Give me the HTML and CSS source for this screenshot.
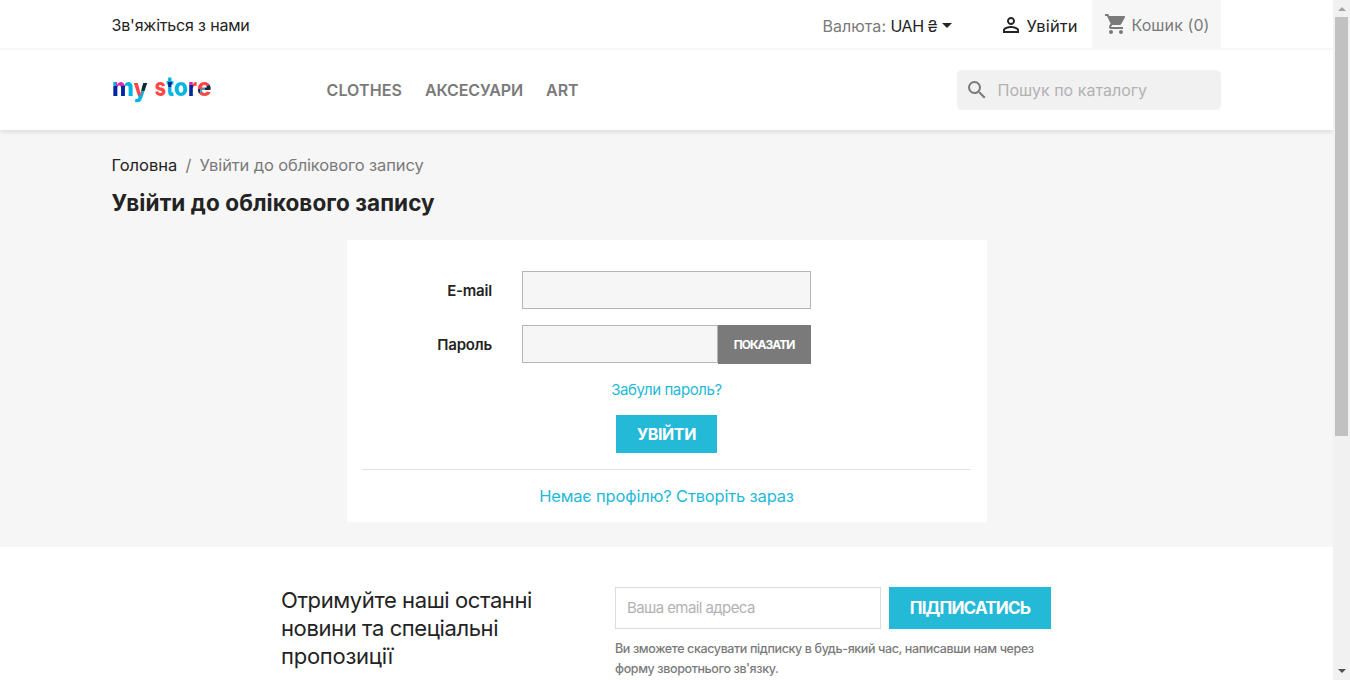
FILE: index.html
```html
<!DOCTYPE html>
<html lang="uk">
<head>
<meta charset="utf-8">
<title>Увійти</title>
<link rel="stylesheet" href="styles.css">
</head>
<body>
<div class="window">
<div class="page">
  <header class="header">
    <nav class="topbar">
      <div class="container topbar-row">
        <a class="contact">Зв'яжіться з нами</a>
        <div class="currency"><span class="currency-label">Валюта:</span><span class="currency-value">UAH ₴</span><i class="caret"></i></div>
        <a class="signin">
          <svg class="icon-user" viewBox="0 0 24 24"><path d="M12 5.9a2.1 2.1 0 1 1 0 4.2 2.1 2.1 0 0 1 0-4.2m0 9c2.970 0 6.100 1.460 6.100 2.100v1.100H5.900V17c0-.640 3.130-2.100 6.100-2.100M12 4C9.790 4 8 5.790 8 8s1.790 4 4 4 4-1.790 4-4-1.790-4-4-4zm0 9c-2.670 0-8 1.340-8 4v3h16v-3c0-2.660-5.330-4-8-4z"/></svg>
          <span class="signin-text">Увійти</span>
        </a>
        <div class="cart">
          <svg class="icon-cart" viewBox="0 0 24 24"><path d="M7 18c-1.100 0-1.990.9-1.990 2S5.900 22 7 22s2-.9 2-2-.9-2-2-2zM1 2v2h2l3.600 7.590-1.350 2.450C5.090 14.320 5 14.650 5 15c0 1.100.9 2 2 2h12v-2H7.420c-.140 0-.250-.110-.250-.250l.030-.120.9-1.630h7.450c.750 0 1.410-.410 1.750-1.030l3.580-6.490A1 1 0 0 0 20 4H5.210l-.940-2H1zm16 16c-1.100 0-1.990.9-1.990 2s.890 2 1.990 2 2-.9 2-2-.9-2-2-2z"/></svg>
          <span class="cart-text">Кошик (0)</span>
        </div>
      </div>
    </nav>
    <div class="container main-row">
      <svg class="logo" viewBox="0 0 100 40" role="img" aria-label="my store">
        <defs>
          <clipPath id="wordmark">
            <text class="logo-text" x="0" y="26" textLength="22" lengthAdjust="spacingAndGlyphs">m</text>
            <text class="logo-text" x="21.500" y="27" textLength="14" lengthAdjust="spacingAndGlyphs">y</text>
            <text class="logo-text" x="42.500" y="26" textLength="11.500" lengthAdjust="spacingAndGlyphs">s</text>
            <text class="logo-text tall" x="54.500" y="26" textLength="7.500" lengthAdjust="spacingAndGlyphs">t</text>
            <text class="logo-text" x="62" y="26" textLength="14" lengthAdjust="spacingAndGlyphs">o</text>
            <text class="logo-text" x="76" y="26" textLength="9" lengthAdjust="spacingAndGlyphs">r</text>
            <text class="logo-text" x="85" y="26" textLength="14.500" lengthAdjust="spacingAndGlyphs">e</text>
          </clipPath>
        </defs>
        <g clip-path="url(#wordmark)">
          <rect class="cyan" width="100" height="40"/>
          <rect class="navy" x="0" y="16" width="13" height="12"/>
          <rect class="magenta" x="4" y="10" width="9" height="6"/>
          <path class="red" d="M21.500 8h8v17h-8z"/>
          <path class="ink" d="M29.500 8h7v13h-7z"/>
          <rect class="red" x="42" y="8" width="12" height="20"/>
          <rect class="navy" x="56" y="12" width="4" height="5"/>
          <rect class="navy" x="76" y="8" width="5" height="20"/>
          <rect class="magenta" x="76" y="10" width="5" height="5"/>
          <rect class="red" x="81" y="8" width="19" height="20"/>
          <path class="cyan" d="M87 20l7-2v3l-7 2z"/>
          <path class="ink" d="M84 20l4-1v4h-4zM93 17l7-3v5l-7 2z"/>
        </g>
      </svg>
      <nav class="menu"><a class="m1">CLOTHES</a><a class="m2">АКСЕСУАРИ</a><a class="m3">ART</a></nav>
      <div class="search">
        <svg class="icon-search" viewBox="0 0 24 24"><path d="M15.500 14h-.790l-.280-.270A6.470 6.470 0 0 0 16 9.500 6.500 6.500 0 1 0 9.500 16c1.610 0 3.090-.590 4.230-1.570l.270.280v.790l5 4.990L20.490 19l-4.990-5zm-6 0C7.010 14 5 11.990 5 9.500S7.010 5 9.500 5 14 7.010 14 9.500 11.990 14 9.500 14z"/></svg>
        <span class="search-text">Пошук по каталогу</span>
      </div>
    </div>
  </header>

  <main class="wrapper">
    <div class="container">
      <div class="breadcrumb"><a class="crumb-home">Головна</a><span class="crumb-sep">/</span><span class="crumb-here">Увійти до облікового запису</span></div>
      <h1 class="title">Увійти до облікового запису</h1>
      <section class="card">
        <div class="field"><label class="label">E-mail</label><div class="input"></div></div>
        <div class="field"><label class="label">Пароль</label><div class="group"><div class="input"></div><button class="show"><span class="show-text">ПОКАЗАТИ</span></button></div></div>
        <a class="forgot">Забули пароль?</a>
        <button class="submit"><span class="submit-text">УВІЙТИ</span></button>
        <hr class="rule">
        <a class="create">Немає профілю? Створіть зараз</a>
      </section>
    </div>
  </main>

  <footer class="newsletter">
    <p class="news-title"><span class="n1">Отримуйте наші останні</span><br><span class="n2">новини та спеціальні</span><br><span class="n3">пропозиції</span></p>
    <div class="news-form">
      <div class="news-row"><div class="news-input"><span class="news-placeholder">Ваша email адреса</span></div><button class="subscribe"><span class="subscribe-text">ПІДПИСАТИСЬ</span></button></div>
      <p class="note"><span class="t1">Ви зможете скасувати підписку в будь-який час, написавши нам через</span><br><span class="t2">форму зворотнього зв'язку.</span></p>
    </div>
  </footer>
</div>
<div class="scrollbar"><i class="arrow-up"></i><div class="thumb"></div><i class="arrow-down"></i></div>
</div>
</body>
</html>
```
FILE: styles.css
```css
* { box-sizing: border-box; }
body { margin: 0; background: #fff; color: #232323; font: 16px/20px Inter, "Noto Sans", sans-serif; overflow: hidden; }
button { border: 0; padding: 0; font-family: inherit; color: #fff; white-space: nowrap; }
span, a, label { white-space: nowrap; }
.window { display: flex; width: 1350px; height: 680px; overflow: hidden; }
.page { width: 1333px; height: 680px; overflow: hidden; }
.container { width: 1110px; margin: 0 auto; }

.header { position: relative; height: 130px; background: #fff; box-shadow: 0 2px 5px rgba(0,0,0,.11); }
.topbar { height: 50px; border-bottom: 2px solid #f6f6f6; }
.topbar-row { display: flex; height: 48px; padding-right: 1px; }
.contact { padding-top: 15px; margin-right: auto; letter-spacing: -.18px; }
.currency { display: flex; width: 179px; padding-top: 16px; }
.currency-label { width: 68px; color: #7a7a7a; letter-spacing: .05px; }
.currency-value { width: 51px; letter-spacing: -.5px; }
.caret { width: 0; height: 0; margin-top: 7px; border: 5px solid transparent; border-top-color: #232323; border-bottom: 0; }
.signin { display: flex; width: 90px; padding-top: 16px; }
.icon-user { width: 24px; height: 24px; margin: -3px 4px 0 -3px; fill: #232323; }
.signin-text { font-size: 16.500px; letter-spacing: .12px; }
.cart { display: flex; width: 129px; height: 48px; padding: 15px 0 0 12px; background: #f6f6f6; color: #7a7a7a; }
.icon-cart { width: 24px; height: 24px; margin: -3px 4px 0 0; fill: #7a7a7a; }
.cart-text { letter-spacing: .08px; }

.main-row { display: flex; padding: 20px 1px 0 0; }
.logo { width: 100px; height: 40px; margin-right: 115px; }
.logo-text { font: 800 25px Inter, sans-serif; }
.logo-text.tall { font-size: 27px; }
.cyan { fill: #00b5e2; }
.navy { fill: #00269a; }
.magenta { fill: #d62ab0; }
.red { fill: #ff4745; }
.ink { fill: #0b2e3a; }
.menu { display: flex; flex: 1; padding-top: 10px; color: #7a7a7a; font-weight: 600; }
.m1 { width: 98.500px; letter-spacing: .1px; }
.m2 { width: 121px; letter-spacing: -.12px; }
.m3 { letter-spacing: 0; }
.search { display: flex; align-items: center; width: 264px; height: 40px; padding-left: 8px; border-radius: 5px; background: #f1f1f1; color: #b2b2b2; }
.icon-search { width: 24px; height: 24px; margin-right: 9px; fill: #7a7a7a; }
.search-text { letter-spacing: .02px; }

.wrapper { height: 417px; padding-top: 25px; background: #f6f6f6; }
.breadcrumb { display: flex; height: 20px; color: #7a7a7a; font-size: 16.500px; }
.crumb-home { width: 74px; color: #232323; letter-spacing: -.03px; }
.crumb-sep { width: 14px; }
.crumb-here { letter-spacing: -.13px; }
.title { margin: 14px 0 23px; font-size: 22.500px; line-height: 28px; font-weight: 650; letter-spacing: .08px; }
.card { display: flex; flex-direction: column; align-items: center; width: 640px; height: 282px; margin: 0 auto; padding: 31px 15px 0; background: #fff; }
.field { display: flex; width: 100%; height: 38px; margin-bottom: 16px; }
.label { width: 130.500px; margin-right: 29.500px; padding-top: 10px; font-size: 15px; font-weight: 600; text-align: right; letter-spacing: -.2px; }
.input { width: 289px; height: 38px; border: 1px solid #b5b5b5; background: #f6f6f6; }
.group { display: flex; width: 289px; }
.group .input { width: 196px; }
.show { width: 93px; height: 39px; background: #7a7a7a; font-size: 12px; font-weight: 700; }
.show-text { letter-spacing: -1px; }
.forgot { margin-top: 1px; color: #24b9d7; font-size: 15px; letter-spacing: -.4px; }
.submit { width: 101px; height: 38px; margin-top: 15px; background: #24b9d7; font-size: 16px; font-weight: 700; }
.submit-text { letter-spacing: -.4px; }
.rule { width: 609px; height: 1px; margin: 16px 0; border: 0; background: #e3e3e3; }
.create { color: #24b9d7; font-size: 16.500px; letter-spacing: -.17px; }

.newsletter { display: flex; padding: 40px 0 0 281px; }
.news-title { width: 334px; margin: -1px 0 0; font-size: 22px; line-height: 28px; letter-spacing: -.4px; }
.n3 { letter-spacing: -.25px; }
.news-row { display: flex; gap: 8px; }
.news-input { width: 266px; height: 42px; padding: 10px 11px; border: 1px solid #dcdcdc; color: #b2b2b2; font-size: 15px; }
.news-placeholder { letter-spacing: -.6px; }
.subscribe { width: 162px; height: 42px; background: #24b9d7; font-size: 17px; font-weight: 700; }
.subscribe-text { letter-spacing: -.8px; }
.note { margin: 10px 0 0; color: #7a7a7a; font-size: 12.500px; line-height: 20px; font-weight: 500; }
.t1, .t2 { letter-spacing: -.38px; }

.scrollbar { display: flex; flex-direction: column; align-items: center; width: 17px; height: 680px; background: #f1f1f1; }
.arrow-up { width: 0; margin: 7px 0 6px; border: 4px solid transparent; border-top: 0; border-bottom-color: #a3a3a3; }
.thumb { width: 13px; height: 419px; background: #c1c1c1; }
.arrow-down { width: 0; margin: auto 0 7px; border: 4px solid transparent; border-bottom: 0; border-top-color: #505050; }
```
